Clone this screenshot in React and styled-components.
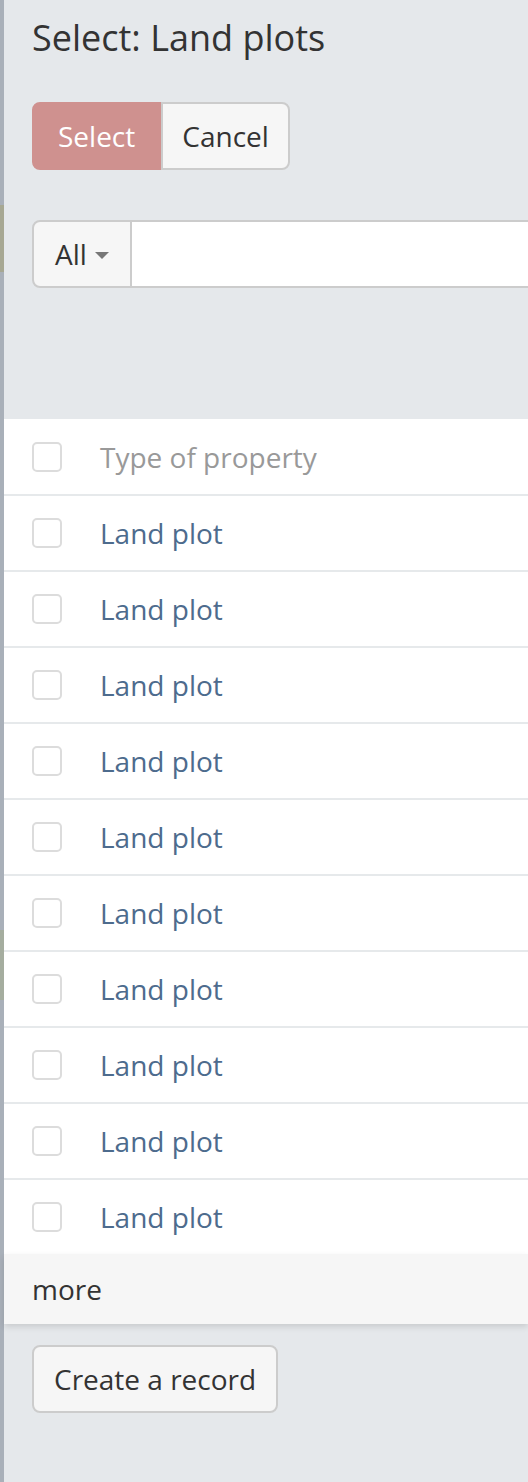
import React from "react";
import styled, {createGlobalStyle} from "styled-components";

const Global = createGlobalStyle`
    html, body {
        margin: 0;
        padding: 0;
        background: #e5e8eb;
        font-family: "Open Sans", "Liberation Sans", sans-serif;
        color: #333;
    }
    * { box-sizing: border-box; }
`;

const Page = styled.div`
    display: flex;
    min-height: 100vh;
    overflow: hidden;
`;
// strip of the dimmed page behind the side panel
const Backdrop = styled.div`
    flex: 0 0 4px;
    background: linear-gradient(
        #a9b0b9 0, #a9b0b9 205px, #a7a893 205px, #a7a893 272px,
        #a9b0b9 272px, #a9b0b9 930px, #a5ad9f 930px, #a5ad9f 1000px,
        #a9b0b9 1000px
    );
`;
const Panel = styled.div`
    flex: 1;
    min-width: 0;
    background: #e5e8eb;
    padding: 18px 0 60px;
`;
const Inner = styled.div`
    padding-left: 28px;
`;
const Title = styled.h3`
    margin: 0;
    font-size: 36px;
    line-height: 40px;
    font-weight: 400;
    color: #333;
`;
const BtnGroup = styled.div`
    display: flex;
    margin-top: 44px;
`;
const Btn = styled.button`
    font-family: inherit;
    font-size: 28px;
    line-height: 40px;
    padding: 12px ${p => p.$pad || 20}px;
    border: 2px solid ${p => p.$primary ? "#cf918f" : "#ccc"};
    background: ${p => p.$primary ? "#cf918f" : "#f6f6f6"};
    color: ${p => p.$primary ? "#fff" : "#333"};
    border-radius: ${p => p.$left ? "8px 0 0 8px" : p.$right ? "0 8px 8px 0" : "8px"};
    cursor: pointer;
`;
const Search = styled.div`
    display: flex;
    margin-top: 50px;
    height: 68px;
`;
const Dropdown = styled.button`
    display: flex;
    align-items: center;
    gap: 8px;
    font-family: inherit;
    font-size: 28px;
    color: #333;
    padding: 0 21px 0 21px;
    background: #f6f6f6;
    border: 2px solid #ccc;
    border-radius: 8px 0 0 8px;
`;
const Caret = styled.span`
    width: 0;
    height: 0;
    border-left: 7px solid transparent;
    border-right: 7px solid transparent;
    border-top: 7px solid #777;
    margin-top: 2px;
`;
const Input = styled.input`
    flex: 1;
    border: 2px solid #ccc;
    border-left: none;
    border-right: none;
    background: #fff;
    font-size: 28px;
`;
const Table = styled.div`
    margin-top: 131px;
    background: #fff;
`;
const Row = styled.div`
    display: flex;
    align-items: center;
    height: ${p => p.$head ? "75px" : "76px"};
    padding-left: 28px;
    border-top: ${p => p.$head ? "none" : "2px solid #e6e9eb"};
`;
const Check = styled.span`
    flex: 0 0 30px;
    height: 30px;
    border: 2px solid #dcdcdc;
    border-radius: 5px;
    background: #fff;
    margin-right: 38px;
`;
const Cell = styled.span`
    font-size: 28px;
    color: ${p => p.$head ? "#999" : "#4d6b8d"};
`;
const More = styled.div`
    height: 70px;
    display: flex;
    align-items: center;
    padding-left: 28px;
    font-size: 28px;
    color: #333;
    background: #f6f6f6;
    box-shadow: 0 3px 6px rgba(0, 0, 0, 0.12);
`;
const Footer = styled.div`
    padding: 21px 0 0 28px;
`;

const rows = Array.from({length: 10}, () => "Land plot");

function App() {
    return (
        <Page>
            <Global/>
            <Backdrop/>
            <Panel>
                <Inner>
                    <Title>Select: Land plots</Title>
                    <BtnGroup>
                        <Btn $primary $left $pad={24}>Select</Btn>
                        <Btn $right $pad={19}>Cancel</Btn>
                    </BtnGroup>
                    <Search>
                        <Dropdown>All<Caret/></Dropdown>
                        <Input type="text"/>
                    </Search>
                </Inner>
                <Table>
                    <Row $head>
                        <Check/>
                        <Cell $head>Type of property</Cell>
                    </Row>
                    {rows.map((r, i) => (
                        <Row key={i}>
                            <Check/>
                            <Cell>{r}</Cell>
                        </Row>
                    ))}
                    <More>more</More>
                </Table>
                <Footer>
                    <Btn $pad={20}>Create a record</Btn>
                </Footer>
            </Panel>
        </Page>
    );
}

export default App;
